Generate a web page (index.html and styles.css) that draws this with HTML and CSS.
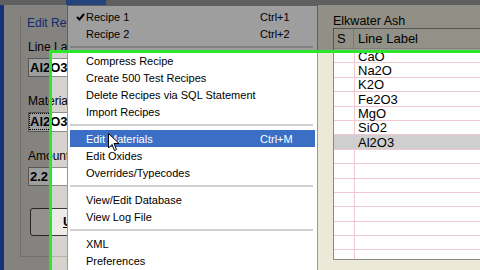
FILE: index.html
```html
<!DOCTYPE html>
<html>
<head>
<meta charset="utf-8">
<link rel="stylesheet" href="styles.css">
</head>
<body>
<div class="screen">
  <div class="topbar">
    <span class="topbar-gap"></span>
    <span class="menu-title"></span>
  </div>
  <div class="main">
    <div class="left-win">
      <div class="frame"></div>
      <div class="pane">
        <div class="group">
          <div class="caption">Edit Recipe Line</div>
          <div class="lbl lbl-first">Line Label</div>
          <div class="field">Al2O3</div>
          <div class="lbl">Material</div>
          <div class="field field-tall"><span class="focusbox">Al2</span>O3</div>
          <div class="lbl">Amount</div>
          <div class="field">2.2</div>
          <div class="btn"><span class="u">U</span>pdate</div>
        </div>
      </div>
    </div>
    <div class="right-win">
      <div class="title">Elkwater Ash</div>
      <div class="list">
        <div class="list-head"><span class="hc1">S</span><span class="hc2">Line Label</span></div>
        <div class="list-body">
          <div class="row">CaO</div>
          <div class="row">Na2O</div>
          <div class="row">K2O</div>
          <div class="row">Fe2O3</div>
          <div class="row">MgO</div>
          <div class="row">SiO2</div>
          <div class="row row-sel">Al2O3</div>
          <div class="row"></div>
          <div class="row"></div>
          <div class="row"></div>
          <div class="row"></div>
          <div class="row"></div>
          <div class="row"></div>
          <div class="row"></div>
        </div>
      </div>
    </div>
  </div>

  <div class="menu">
    <div class="item"><span class="check"><svg width="9" height="8" viewBox="0 0 9 8"><path d="M1 4 L3.5 6.5 L8 1" fill="none" stroke="#000" stroke-width="2"/></svg></span><span class="label">Recipe 1</span><span class="key">Ctrl+1</span></div>
    <div class="item"><span class="label">Recipe 2</span><span class="key">Ctrl+2</span></div>
    <div class="sep"></div>
    <div class="item"><span class="label">Compress Recipe</span></div>
    <div class="item"><span class="label">Create 500 Test Recipes</span></div>
    <div class="item"><span class="label">Delete Recipes via SQL Statement</span></div>
    <div class="item"><span class="label">Import Recipes</span></div>
    <div class="sep"></div>
    <div class="item item-hot"><span class="label">Edit Materials</span><span class="key">Ctrl+M</span></div>
    <div class="item"><span class="label">Edit Oxides</span></div>
    <div class="item"><span class="label">Overrides/Typecodes</span></div>
    <div class="sep"></div>
    <div class="item"><span class="label">View/Edit Database</span></div>
    <div class="item"><span class="label">View Log File</span></div>
    <div class="sep"></div>
    <div class="item"><span class="label">XML</span></div>
    <div class="item"><span class="label">Preferences</span></div>
  </div>

  <svg class="cursor" width="12" height="19" viewBox="0 0 12 19"><path d="M0.5 0.5 L0.5 15 L4 11.5 L6.5 17.5 L8.5 16.5 L6 10.5 L11 10.5 Z" fill="#fff" stroke="#000" stroke-width="1"/></svg>

  <div class="focus"></div>
</div>
</body>
</html>
```

FILE: styles.css
```css
* { box-sizing: border-box; }
html, body { margin: 0; padding: 0; }
body {
  width: 480px;
  height: 270px;
  overflow: hidden;
  font-family: "Liberation Sans", Arial, sans-serif;
  color: #000;
}
.screen {
  position: relative;
  width: 480px;
  height: 270px;
  overflow: hidden;
  display: flex;
  flex-direction: column;
  background: #d6d3ce;
}
.topbar {
  height: 5px;
  flex: none;
  display: flex;
  background: #9a9a9a;
}
.topbar-gap { width: 66px; }
.menu-title { width: 40px; background: #3a6cc8; }

.main {
  flex: 1;
  display: flex;
  min-height: 0;
}
.left-win {
  width: 318px;
  flex: none;
  display: flex;
  background: #d6d3ce;
}
.frame { width: 4px; flex: none; background: #2452c4; }
.pane {
  flex: 1;
  padding: 11px 0 0 16px;
}
.group {
  width: 200px;
  height: 241px;
  border: 1px solid #b8b4aa;
  border-top-color: transparent;
  padding: 0 0 0 7px;
  display: flex;
  flex-direction: column;
  align-items: flex-start;
}
.caption {
  font-size: 12px;
  line-height: 12px;
  color: #1c46b8;
  margin-left: -1px;
  white-space: nowrap;
}
.lbl {
  font-size: 12px;
  line-height: 12px;
  margin-top: 17px;
  white-space: nowrap;
}
.lbl-first { margin-top: 12px; }
.field {
  margin-top: 5px;
  width: 120px;
  height: 19px;
  background: #fff;
  border: 1px solid #8d8d8d;
  font-size: 13px;
  font-weight: bold;
  line-height: 17px;
  padding-left: 1px;
}
.field + .lbl { margin-top: 18px; }
.field-tall { height: 20px; }
.focusbox { outline: 1px dotted #000; outline-offset: 0; }
.btn {
  margin-top: 22px;
  margin-left: 2px;
  width: 110px;
  height: 28px;
  border: 1px solid #3c3c3c;
  border-radius: 3px;
  background: #ecebe6;
  font-size: 13px;
  font-weight: bold;
  line-height: 26px;
  text-align: center;
}
.u { text-decoration: underline; }

.right-win {
  flex: 1;
  background: #ece9d8;
  padding: 9px 0 0 15px;
  display: flex;
  flex-direction: column;
}
.title {
  font-size: 12.5px;
  line-height: 14px;
}
.list {
  width: 160px;
  height: 232px;
  border: 1px solid #8a8a8a;
  border-right: none;
  background: #fff;
  overflow: hidden;
}
.list-head {
  height: 20px;
  background: #ebeadb;
  border-bottom: 1px solid #d0cfc2;
  display: flex;
  font-size: 13px;
  line-height: 19px;
}
.hc1 { width: 20px; padding-left: 3px; border-right: 1px solid #c8c6b8; }
.hc2 { padding-left: 4px; }
.list-body {
  height: 212px;
  background: linear-gradient(to right, transparent 20px, #f0c8cf 20px, #f0c8cf 21px, transparent 21px);
}
.row {
  height: 14.4px;
  border-bottom: 1px solid #f0c8cf;
  padding: 1.5px 0 0 24px;
  font-size: 13px;
  line-height: 12.4px;
}
.row-sel { background: #cfcfcf; }

.menu {
  position: absolute;
  left: 67px;
  top: 5px;
  width: 251px;
  height: 280px;
  background: #fff;
  border: 1px solid #9a9a9a;
  padding: 2px;
  font-size: 11px;
}
.item {
  height: 17px;
  display: flex;
  align-items: center;
  position: relative;
  padding-left: 16px;
}
.label { width: 174px; }
.check { position: absolute; left: 6px; top: 5px; line-height: 0; }
.item-hot { background: #3b6fc6; color: #fff; }
.sep {
  height: 10px;
  display: flex;
  align-items: center;
}
.sep::before {
  content: "";
  flex: 1;
  height: 2px;
  background: #d0d0d0;
  margin-right: 2px;
}
.cursor {
  position: absolute;
  left: 108px;
  top: 133px;
}
.focus {
  position: absolute;
  left: 49px;
  top: 50px;
  width: 440px;
  height: 240px;
  border: 3px solid #2ce62c;
  box-shadow: 0 0 0 700px rgba(0, 0, 0, 0.38);
}
```
